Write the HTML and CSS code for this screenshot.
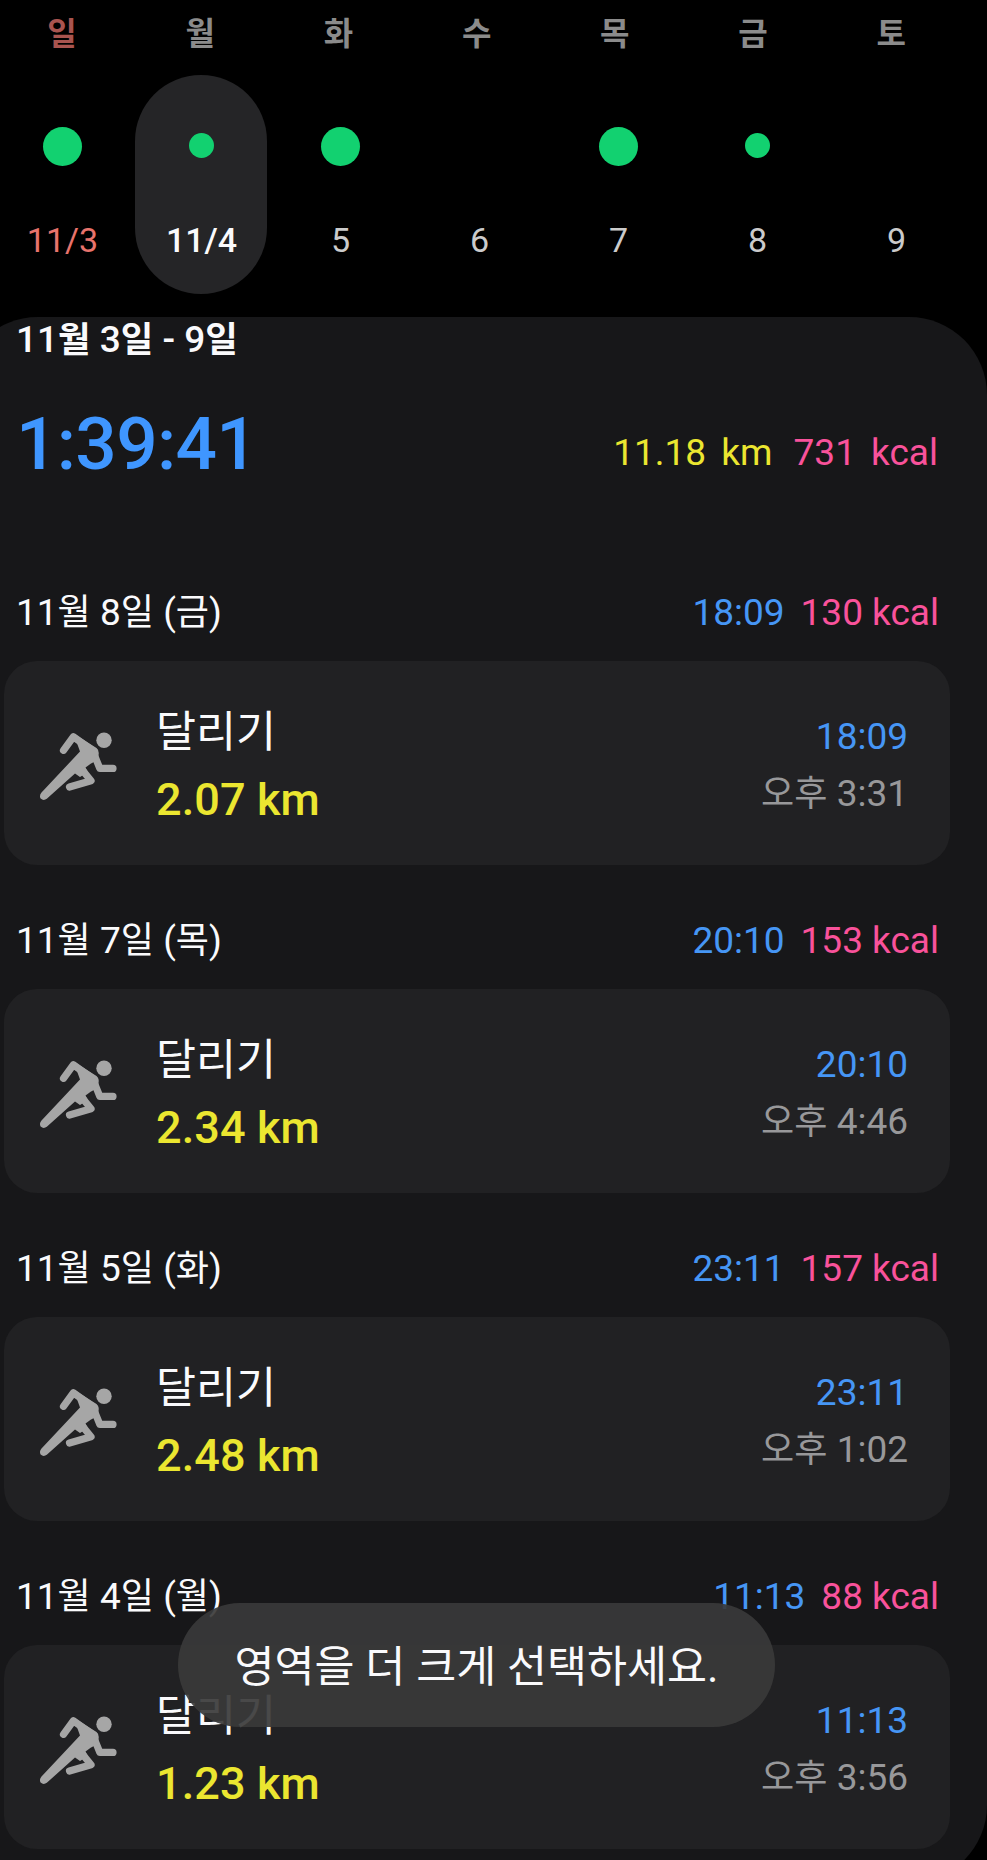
FILE: index.html
```
<!DOCTYPE html>
<html lang="ko">
<head>
    <meta charset="UTF-8">
    <meta name="viewport" content="width=device-width, initial-scale=1.0">
    <title>운동 기록</title>
    <link rel="stylesheet" href="styles.css">
</head>
<body>
    <svg width="0" height="0" class="symbols">
        <symbol id="runner" viewBox="0 0 100 100">
            <circle cx="74" cy="25.3" r="7.7"/>
            <path d="M33.5 35.3L43.3 21.8L64 36.5" class="limb"/>
            <path d="M64 39L69.8 53.4H83" class="limb"/>
            <path d="M49 51L61 65.8L39.5 72" class="limb"/>
            <path d="M43.5 18.5L66.5 33Q69.5 35.5 68.5 40L68 45L61 48.5L55.5 52.5L58 57L50 62L45 58.5L16.8 83.8Q13.5 86.2 10.6 83.5Q9 80.5 11.5 77.5L50 36.5Z"/>
        </symbol>
    </svg>

    <div class="weekdays">
        <span class="sunday">일</span>
        <span>월</span>
        <span>화</span>
        <span>수</span>
        <span>목</span>
        <span>금</span>
        <span>토</span>
    </div>
    <div class="week">
        <div class="day sunday">
            <div class="mark"><i class="dot"></i></div>
            <span>11/3</span>
        </div>
        <div class="day selected">
            <div class="mark"><i class="dot small"></i></div>
            <span>11/4</span>
        </div>
        <div class="day">
            <div class="mark"><i class="dot"></i></div>
            <span>5</span>
        </div>
        <div class="day">
            <div class="mark"></div>
            <span>6</span>
        </div>
        <div class="day">
            <div class="mark"><i class="dot"></i></div>
            <span>7</span>
        </div>
        <div class="day">
            <div class="mark"><i class="dot small"></i></div>
            <span>8</span>
        </div>
        <div class="day">
            <div class="mark"></div>
            <span>9</span>
        </div>
    </div>

    <main class="sheet">
        <h1>11<span class="ko">월</span> 3<span class="ko">일</span> - 9<span class="ko">일</span></h1>
        <div class="summary">
            <span class="total-time">1:39:41</span>
            <div class="totals">
                <span class="distance">11.18 km</span>
                <span class="kcal">731 kcal</span>
            </div>
        </div>

        <section>
            <div class="date-row">
                <h2>11<span class="ko">월</span> 8<span class="ko">일</span> (<span class="ko">금</span>)</h2>
                <span class="time">18:09</span>
                <span class="kcal">130 kcal</span>
            </div>
            <div class="card">
                <svg class="icon"><use href="#runner"/></svg>
                <div class="info">
                    <div class="name">달리기</div>
                    <div class="distance">2.07 km</div>
                </div>
                <div class="when">
                    <div class="time">18:09</div>
                    <div class="clock"><span class="ko">오후</span> 3:31</div>
                </div>
            </div>
        </section>

        <section>
            <div class="date-row">
                <h2>11<span class="ko">월</span> 7<span class="ko">일</span> (<span class="ko">목</span>)</h2>
                <span class="time">20:10</span>
                <span class="kcal">153 kcal</span>
            </div>
            <div class="card">
                <svg class="icon"><use href="#runner"/></svg>
                <div class="info">
                    <div class="name">달리기</div>
                    <div class="distance">2.34 km</div>
                </div>
                <div class="when">
                    <div class="time">20:10</div>
                    <div class="clock"><span class="ko">오후</span> 4:46</div>
                </div>
            </div>
        </section>

        <section>
            <div class="date-row">
                <h2>11<span class="ko">월</span> 5<span class="ko">일</span> (<span class="ko">화</span>)</h2>
                <span class="time">23:11</span>
                <span class="kcal">157 kcal</span>
            </div>
            <div class="card">
                <svg class="icon"><use href="#runner"/></svg>
                <div class="info">
                    <div class="name">달리기</div>
                    <div class="distance">2.48 km</div>
                </div>
                <div class="when">
                    <div class="time">23:11</div>
                    <div class="clock"><span class="ko">오후</span> 1:02</div>
                </div>
            </div>
        </section>

        <section>
            <div class="date-row">
                <h2>11<span class="ko">월</span> 4<span class="ko">일</span> (<span class="ko">월</span>)</h2>
                <span class="time">11:13</span>
                <span class="kcal">88 kcal</span>
            </div>
            <div class="card">
                <svg class="icon"><use href="#runner"/></svg>
                <div class="info">
                    <div class="name">달리기</div>
                    <div class="distance">1.23 km</div>
                </div>
                <div class="when">
                    <div class="time">11:13</div>
                    <div class="clock"><span class="ko">오후</span> 3:56</div>
                </div>
            </div>
        </section>
    </main>

    <div class="toast">영역을 더 크게 선택하세요.</div>
</body>
</html>
```
FILE: styles.css
```
* {
    box-sizing: border-box;
}
body {
    position: relative;
    width: 987px;
    height: 1860px;
    margin: 0;
    overflow: hidden;
    background-color: #000;
    color: #fafafc;
    font-family: Roboto, "Noto Sans CJK KR", sans-serif;
    font-size: 37px;
}
h1, h2 {
    margin: 0;
    font-size: 37px;
}
/* hangul runs a little smaller than the digits around it */
.ko {
    font-size: 0.975em;
    line-height: 0;
}
.symbols {
    position: absolute;
}

/* calendar strip */
.weekdays {
    display: grid;
    grid-template-columns: repeat(7, 138.2px);
    margin: 0 0 7px -7px;
    font-size: 32px;
    font-weight: 700;
    line-height: 68px;
    text-align: center;
    color: #8b8b8b;
}
.weekdays .sunday {
    color: #a9544f;
}
.week {
    display: grid;
    grid-template-columns: repeat(7, 132px);
    gap: 7px;
    margin-left: -4px;
}
.day {
    height: 219px;
    border-radius: 66px;
    font-size: 34px;
    line-height: 40px;
    text-align: center;
    color: #cbcbcb;
}
.day.sunday {
    color: #e8736c;
}
.day.selected {
    background-color: #252527;
    color: #fafafc;
    font-weight: 500;
}
.mark {
    display: flex;
    align-items: center;
    justify-content: center;
    height: 143px;
    margin-bottom: 2px;
}
.day span {
    padding-left: 1px;
}
.dot {
    width: 39px;
    height: 39px;
    margin-left: 1px;
    border-radius: 50%;
    background-color: #12d170;
}
.dot.small {
    width: 25px;
    height: 25px;
    margin-bottom: 2px;
}

/* record list */
.sheet {
    width: 1027px;
    height: 1566px;
    margin: 23px 0 0 -40px;
    padding-left: 40px;
    border-radius: 78px;
    background-color: #171719;
}
h1 {
    padding-left: 16px;
    font-weight: 500;
    line-height: 46px;
}
h1 .ko {
    font-size: 0.955em;
    font-weight: 700;
}
.summary {
    display: flex;
    justify-content: space-between;
    margin: 41px 0 105px;
    padding: 0 49px 0 16px;
    line-height: 80px;
}
.total-time {
    font-size: 73px;
    font-weight: 500;
    letter-spacing: -0.7px;
    color: #3f96ff;
}
.totals {
    display: flex;
    gap: 21px;
    margin-top: 9px;
    height: 71px;
    word-spacing: 6px;
}
.time {
    color: #4696f5;
}
.distance {
    color: #ebe630;
}
.kcal {
    color: #f9529b;
}
section {
    margin-bottom: 52px;
}
.date-row {
    display: flex;
    gap: 16px;
    margin-bottom: 24px;
    padding: 0 48px 0 16px;
    line-height: 48px;
}
h2 {
    flex: 1;
    font-weight: 400;
}
.card {
    display: flex;
    width: 946px;
    height: 204px;
    margin-left: 4px;
    padding: 0 42px 0 26px;
    border-radius: 33px;
    background-color: #212123;
}
.icon {
    width: 100px;
    height: 100px;
    margin: 54px 26px 0 0;
    fill: #a6a6a6;
}
.limb {
    fill: none;
    stroke: #a6a6a6;
    stroke-width: 7.2;
    stroke-linecap: round;
    stroke-linejoin: round;
}
.info {
    flex: 1;
    padding-top: 42px;
    line-height: 60px;
}
.name {
    margin-bottom: 7px;
    font-size: 43.5px;
}
.info .distance {
    font-size: 45px;
    font-weight: 500;
    letter-spacing: 0.1px;
}
.when {
    padding-top: 47px;
    line-height: 57px;
    text-align: right;
}
.clock {
    color: #98989a;
}

.toast {
    position: absolute;
    left: 178px;
    top: 1603px;
    width: 597px;
    height: 124px;
    border-radius: 62px;
    background-color: rgba(57, 57, 57, 0.92);
    font-size: 43.5px;
    line-height: 129px;
    text-align: center;
}
```
